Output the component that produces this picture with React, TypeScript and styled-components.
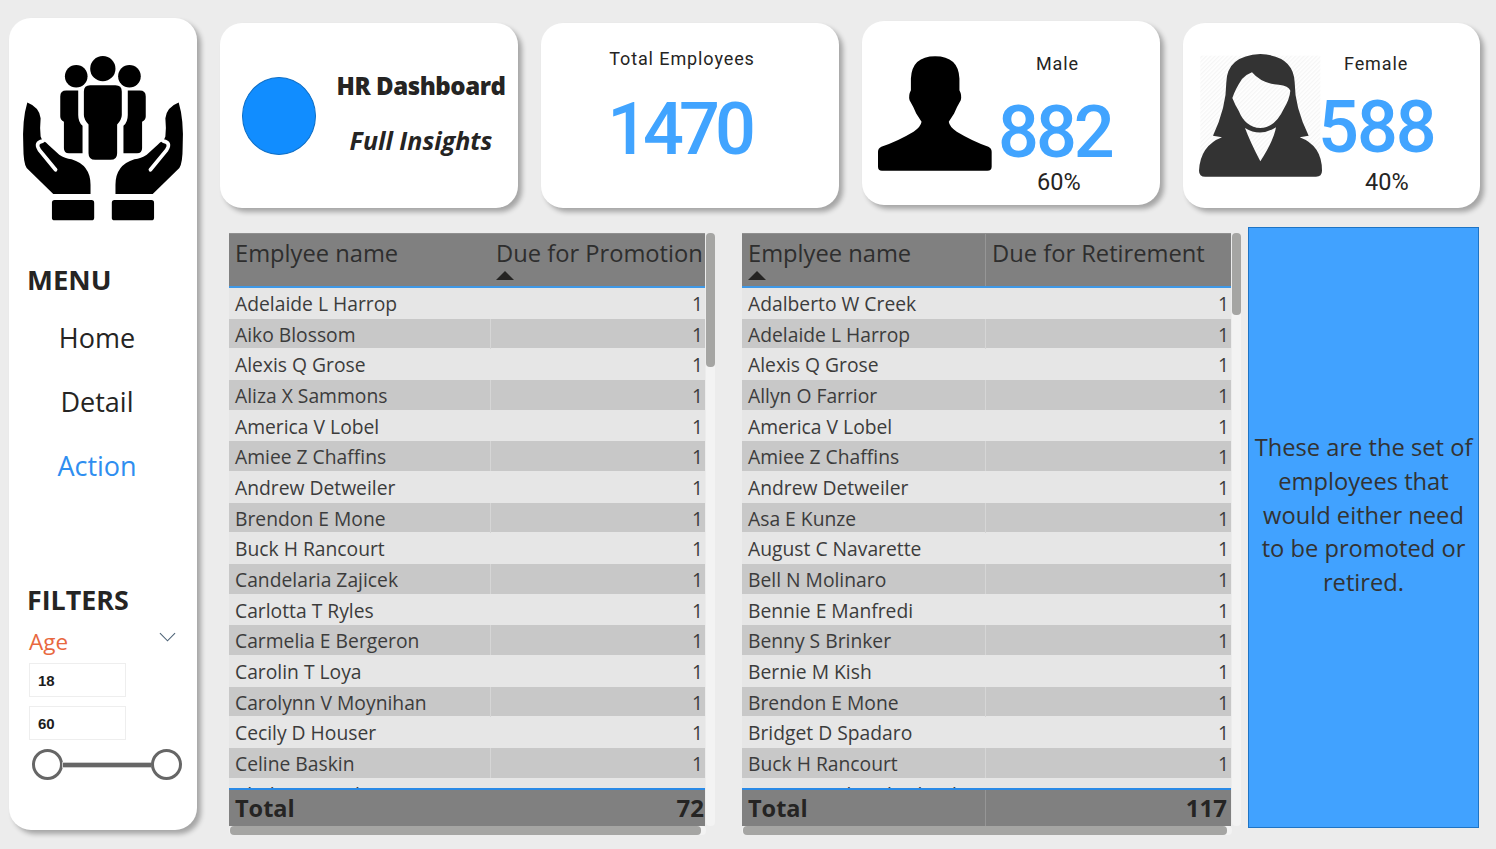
import React from 'react';
import styled, { createGlobalStyle } from 'styled-components';

const promotion = [
  'Adelaide L Harrop', 'Aiko Blossom', 'Alexis Q Grose', 'Aliza X Sammons', 'America V Lobel', 'Amiee Z Chaffins',
  'Andrew Detweiler', 'Brendon E Mone', 'Buck H Rancourt', 'Candelaria Zajicek', 'Carlotta T Ryles', 'Carmelia E Bergeron',
  'Carolin T Loya', 'Carolynn V Moynihan', 'Cecily D Houser', 'Celine Baskin', 'Chelsie D Pash',
];

const retirement = [
  'Adalberto W Creek', 'Adelaide L Harrop', 'Alexis Q Grose', 'Allyn O Farrior', 'America V Lobel', 'Amiee Z Chaffins',
  'Andrew Detweiler', 'Asa E Kunze', 'August C Navarette', 'Bell N Molinaro', 'Bennie E Manfredi', 'Benny S Brinker',
  'Bernie M Kish', 'Brendon E Mone', 'Bridget D Spadaro', 'Buck H Rancourt', 'Carmen J Chamberland',
];

const HandSide = ({ flip }: { flip?: boolean }) => (
  <g transform={flip ? 'translate(619 0) scale(-1 1)' : undefined}>
    <path d="M181 290Q181 272 199 272H235V345Q235 366 248 378V460H207Q192 460 192 445V366Q181 360 181 350Z" />
    <path d="M82 308Q118 322 122 355Q119 385 122 410L128 424Q138 425 145 435L178 465Q195 477 215 478Q272 495 272 555V583H160L80 505Q70 490 70 440Q66 360 82 308Z" />
    <path d="M128 424Q104 428 118 450L167 510" fill="none" stroke="#fff" strokeWidth="11" strokeLinecap="round" />
    <rect x="156" y="601" width="127" height="61" rx="8" />
  </g>
);

const HandsIcon = () => (
  <svg width="163" height="168" viewBox="66 165 490 505">
    <circle cx="309" cy="206" r="38" />
    <circle cx="229" cy="229" r="34" />
    <circle cx="389" cy="229" r="34" />
    <path d="M252 275Q252 256 271 256H347Q366 256 366 275V345Q366 358 352 374V460Q352 480 332 480H286Q266 480 266 460V374Q252 358 252 345Z" />
    <HandSide />
    <HandSide flip />
  </svg>
);

const MaleIcon = () => (
  <svg width="114" height="115" viewBox="83 138 343 344">
    <path d="M255 138Q325 138 328 205L328 240Q336 255 332 270Q320 290 312 310L296 335Q298 350 320 365Q370 395 415 410Q425 415 425 425V470Q425 482 412 482H95Q83 482 83 470V425Q83 415 93 410Q140 395 190 365Q212 350 214 335L198 310Q190 290 178 270Q174 255 182 240L182 205Q185 138 255 138Z" />
  </svg>
);

const FemaleIcon = () => (
  <svg width="123" height="123" viewBox="86 130 369 369">
    <defs>
      <pattern id="hatch" width="9" height="9" patternUnits="userSpaceOnUse" patternTransform="rotate(45)">
        <rect width="4" height="9" fill="#f5f5f5" />
      </pattern>
    </defs>
    <rect x="90" y="135" width="360" height="360" fill="url(#hatch)" />
    <path
      fill="#333"
      fillRule="evenodd"
      d="M270 130Q370 135 373 215Q373 290 415 375L388 380Q455 405 455 480Q455 498 437 498H105Q86 498 86 480Q90 405 155 380L128 375Q168 290 168 215Q170 135 270 130ZM245 185Q230 190 215 205Q195 235 186 262Q195 285 205 300Q225 350 270 352Q315 350 340 295Q358 265 360 240Q355 225 325 222Q275 220 245 185ZM224 352Q240 395 270 452Q310 390 317 350Q270 380 224 352Z"
    />
  </svg>
);

const DataTable = ({ names, title, total, split, thumb, sortFirst, width }: {
  names: string[];
  title: string;
  total: number;
  split: number;
  thumb: number;
  sortFirst: boolean;
  width: number;
}) => (
  <TableFrame $width={width}>
    <TableMain>
      <TableBody>
        <HeaderRow $split={split}>
          <HeaderCell>
            Emplyee name
            {sortFirst && <SortMark />}
          </HeaderCell>
          <HeaderCell $divider={sortFirst}>
            {title}
            {!sortFirst && <SortMark />}
          </HeaderCell>
        </HeaderRow>
        <Rows>
          {names.map((name, i) => (
            <Row key={name} $split={split} $alt={i % 2 === 1}>
              <NameCell>{name}</NameCell>
              <ValueCell $alt={i % 2 === 1}>1</ValueCell>
            </Row>
          ))}
        </Rows>
        <TotalRow $split={split}>
          <TotalCell>Total</TotalCell>
          <TotalValue $divider={sortFirst}>{total}</TotalValue>
        </TotalRow>
      </TableBody>
      <ScrollTrack>
        <ScrollThumb $height={thumb} />
      </ScrollTrack>
    </TableMain>
    <BottomTrack>
      <BottomThumb />
    </BottomTrack>
  </TableFrame>
);

const App = () => {
  return (
    <Page>
      <GlobalStyle />
      <Sidebar>
        <LogoBox>
          <HandsIcon />
        </LogoBox>
        <SideHeading>MENU</SideHeading>
        <MenuList>
          <MenuItem>Home</MenuItem>
          <MenuItem>Detail</MenuItem>
          <MenuItem $active>Action</MenuItem>
        </MenuList>
        <FilterHeading>FILTERS</FilterHeading>
        <AgeRow>
          <AgeLabel>Age</AgeLabel>
          <svg width="17" height="10" viewBox="0 0 18 10">
            <polyline points="1,1 9,9 17,1" fill="none" stroke="#4f6478" strokeWidth="1.2" />
          </svg>
        </AgeRow>
        <AgeInput>18</AgeInput>
        <AgeInput>60</AgeInput>
        <Slider>
          <Handle />
          <SliderLine />
          <Handle />
        </Slider>
      </Sidebar>
      <Main>
        <TopRow>
          <HeroCard>
            <HeroCircle />
            <HeroText>
              <HeroTitle>HR Dashboard</HeroTitle>
              <HeroSub>Full Insights</HeroSub>
            </HeroText>
          </HeroCard>
          <TotalCard>
            <TotalLabel>Total Employees</TotalLabel>
            <TotalNumber>1470</TotalNumber>
          </TotalCard>
          <MaleCard>
            <MaleIcon />
            <GenderStats>
              <MaleLabel>Male</MaleLabel>
              <MaleNumber>882</MaleNumber>
              <Percent>60%</Percent>
            </GenderStats>
          </MaleCard>
          <FemaleCard>
            <FemaleIcon />
            <GenderStats>
              <FemaleLabel>Female</FemaleLabel>
              <FemaleNumber>588</FemaleNumber>
              <FemalePercent>40%</FemalePercent>
            </GenderStats>
          </FemaleCard>
        </TopRow>
        <BottomRow>
          <DataTable names={promotion} title="Due for Promotion" total={72} split={261} thumb={134} sortFirst={false} width={486} />
          <DataTable names={retirement} title="Due for Retirement" total={117} split={243} thumb={82} sortFirst width={499} />
          <NotePanel>These are the set of employees that would either need to be promoted or retired.</NotePanel>
        </BottomRow>
      </Main>
    </Page>
  );
};

export default App;

const GlobalStyle = createGlobalStyle`
  html, body {
    margin: 0;
    padding: 0;
    background: #ececec;
    overflow: hidden;
  }
  * {
    box-sizing: border-box;
  }
`;

const Page = styled.div`
  display: flex;
  width: 1496px;
  height: 849px;
  padding: 18px 0 0 9px;
  background: #ececec;
  font-family: 'Open Sans', 'Noto Sans', sans-serif;
  color: #252423;
`;

const Sidebar = styled.aside`
  width: 188px;
  height: 812px;
  padding: 37px 0 0 19px;
  background: #fff;
  border-radius: 22px;
  box-shadow: 4px 4px 5px rgba(0, 0, 0, 0.3);
`;

const LogoBox = styled.div`
  display: flex;
  margin-left: -6px;
  height: 168px;
`;

const SideHeading = styled.div`
  margin: 39px 0 0 -1px;
  font-size: 27.5px;
  line-height: 36px;
  font-weight: 700;
`;

const MenuList = styled.div`
  display: flex;
  flex-direction: column;
  gap: 26px;
  width: 138px;
  margin-top: 21px;
`;

const MenuItem = styled.div<{ $active?: boolean }>`
  text-align: center;
  font-size: 27px;
  line-height: 38px;
  color: ${({ $active }) => ($active ? '#2f8ef0' : '#252423')};
`;

const FilterHeading = styled.div`
  margin: 97px 0 0 -1px;
  font-size: 26.8px;
  line-height: 36px;
  font-weight: 700;
`;

const AgeRow = styled.div`
  display: flex;
  justify-content: space-between;
  align-items: center;
  width: 148px;
  height: 32px;
  margin: 7px 0 6px;
  svg {
    margin-top: -8px;
  }
`;

const AgeLabel = styled.div`
  font-size: 22.5px;
  color: #e8683f;
  padding-left: 1px;
`;

const AgeInput = styled.div`
  width: 97px;
  height: 34px;
  margin: 0 0 9px 1px;
  padding-left: 8px;
  border: 1px solid #eeeeee;
  font-family: 'Liberation Sans', sans-serif;
  font-size: 15px;
  font-weight: 700;
  line-height: 34px;
  color: #1c1c1c;
`;

const Slider = styled.div`
  display: flex;
  align-items: center;
  width: 150px;
  margin: 0 0 0 4px;
`;

const Handle = styled.div`
  flex: none;
  width: 31px;
  height: 31px;
  border: 3px solid #666;
  border-radius: 50%;
  background: #fff;
`;

const SliderLine = styled.div`
  flex: 1;
  height: 4px;
  background: #666;
  box-shadow: 0 0 0 1px #ccc;
`;

const Main = styled.main`
  width: 1260px;
  margin-left: 23px;
`;

const TopRow = styled.div`
  display: flex;
  gap: 23px;
  height: 191px;
`;

const Card = styled.div`
  width: 298px;
  height: 185px;
  margin-top: 5px;
  background: #fff;
  border-radius: 22px;
  box-shadow: 4px 4px 5px rgba(0, 0, 0, 0.3);
`;

const HeroCard = styled(Card)`
  display: flex;
  align-items: center;
  padding-left: 22px;
`;

const HeroCircle = styled.div`
  flex: none;
  width: 74px;
  height: 78px;
  border-radius: 50%;
  background: #118dff;
  border: 1px solid #0f6fc6;
`;

const HeroText = styled.div`
  width: 180px;
  margin: -5px 0 0 15px;
  text-align: center;
`;

const HeroTitle = styled.div`
  font-size: 24px;
  line-height: 34px;
  font-weight: 800;
  letter-spacing: -0.45px;
  white-space: nowrap;
`;

const HeroSub = styled.div`
  margin-top: 20px;
  font-size: 25px;
  line-height: 34px;
  font-style: italic;
  font-weight: 700;
  white-space: nowrap;
`;

const TotalCard = styled(Card)`
  display: flex;
  flex-direction: column;
  align-items: center;
  padding: 24px 22px 0 0;
`;

const StatLabel = styled.div`
  font-family: Roboto, sans-serif;
  font-size: 18px;
  line-height: 24px;
  letter-spacing: 0.9px;
`;

const TotalLabel = styled(StatLabel)`
  margin-right: -6px;
`;

const BigNumber = styled.div`
  margin-top: 5px;
  font-family: Roboto, sans-serif;
  font-size: 72px;
  font-weight: 500;
  line-height: 84px;
  letter-spacing: -3px;
  color: #41a4ff;
`;

const TotalNumber = styled(BigNumber)`
  margin-top: 17px;
  letter-spacing: -5px;
`;

const MaleCard = styled(Card)`
  display: flex;
  align-items: flex-start;
  height: 184px;
  margin-top: 3px;
  padding: 35px 0 0 16px;
`;

const FemaleCard = styled(Card)`
  display: flex;
  align-items: flex-start;
  width: 297px;
  padding: 31px 0 0 16px;
`;

const GenderStats = styled.div`
  position: relative;
  display: flex;
  flex-direction: column;
`;

const MaleLabel = styled(StatLabel)`
  margin: -4px 0 0 44px;
`;

const FemaleLabel = styled(StatLabel)`
  margin: -2px 0 0 22px;
`;

const MaleNumber = styled(BigNumber)`
  margin: 15px 0 0 6px;
`;

const FemaleNumber = styled(BigNumber)`
  margin: 10px 0 0 -4px;
  letter-spacing: -2px;
`;

const Percent = styled.div`
  margin: -8px 0 0 45px;
  font-family: Roboto, sans-serif;
  font-size: 23.5px;
  line-height: 30px;
`;

const FemalePercent = styled(Percent)`
  margin: -3px 0 0 43px;
`;

const BottomRow = styled.div`
  display: flex;
  align-items: flex-start;
  padding-top: 18px;
  padding-left: 9px;
`;

const TableFrame = styled.div<{ $width: number }>`
  flex: none;
  width: ${({ $width }) => $width}px;
  margin: 6px 7px 0 0;
  & + & {
    margin-left: 20px;
  }
`;

const TableMain = styled.div`
  display: flex;
  justify-content: space-between;
`;

const TableBody = styled.div`
  flex: 1;
  display: flex;
  flex-direction: column;
  height: 593px;
  margin-right: 1px;
  overflow: hidden;
`;

const HeaderRow = styled.div<{ $split: number }>`
  flex: none;
  display: grid;
  grid-template-columns: ${({ $split }) => $split}px 1fr;
  height: 55px;
  background: #808080;
  border-top: 1px solid #909090;
  border-bottom: 2px solid #3f98e6;
`;

const HeaderCell = styled.div<{ $divider?: boolean }>`
  padding: 3px 0 0 6px;
  font-size: 23.7px;
  line-height: 32px;
  white-space: nowrap;
  overflow: hidden;
  color: #2e2e2e;
  border-left: ${({ $divider }) => ($divider ? '1px solid #969696' : 'none')};
`;

const SortMark = styled.div`
  width: 0;
  height: 0;
  margin-top: 2px;
  border-left: 9px solid transparent;
  border-right: 9px solid transparent;
  border-bottom: 9px solid #252423;
`;

const Rows = styled.div`
  flex: 1;
  min-height: 0;
  overflow: hidden;
`;

const Row = styled.div<{ $split: number; $alt: boolean }>`
  display: grid;
  grid-template-columns: ${({ $split }) => $split}px 1fr;
  height: 30.67px;
  background: ${({ $alt }) => ($alt ? '#c8c8c8' : '#e6e6e6')};
  border-bottom: 1px solid #e6e6e6;
`;

const NameCell = styled.div`
  padding: 1px 0 0 6px;
  font-size: 19.3px;
  line-height: 29px;
  white-space: nowrap;
  color: #3c3c3c;
`;

const ValueCell = styled.div<{ $alt: boolean }>`
  padding: 1px 2px 0 0;
  text-align: right;
  font-size: 19.3px;
  line-height: 29px;
  color: #3c3c3c;
  border-left: 1px solid ${({ $alt }) => ($alt ? '#d6d6d6' : '#e6e6e6')};
`;

const TotalRow = styled.div<{ $split: number }>`
  flex: none;
  display: grid;
  grid-template-columns: ${({ $split }) => $split}px 1fr;
  height: 38px;
  background: #808080;
  border-top: 2px solid #2b8ae6;
`;

const TotalCell = styled.div`
  padding-left: 6px;
  font-size: 23.5px;
  line-height: 36px;
  font-weight: 700;
  color: #252423;
`;

const TotalValue = styled(TotalCell)<{ $divider?: boolean }>`
  padding: 0 ${({ $divider }) => ($divider ? '4px' : '1px')} 0 0;
  font-size: 24px;
  text-align: right;
  border-left: ${({ $divider }) => ($divider ? '1px solid #969696' : 'none')};
`;

const ScrollTrack = styled.div`
  flex: none;
  width: 9px;
  height: 593px;
  background: #f3f3f3;
  border-radius: 4px;
`;

const ScrollThumb = styled.div<{ $height: number }>`
  width: 9px;
  height: ${({ $height }) => $height}px;
  background: #a5a5a3;
  border-radius: 4px;
`;

const BottomTrack = styled.div`
  width: calc(100% - 9px);
  height: 9px;
  padding: 0 5px 0 1px;
  background: #f3f3f3;
  border-radius: 4px;
`;

const BottomThumb = styled.div`
  height: 9px;
  background: #a5a5a3;
  border-radius: 4px;
`;

const NotePanel = styled.div`
  flex: none;
  display: flex;
  align-items: center;
  width: 231px;
  height: 601px;
  padding: 0 5px 24px;
  background: #41a2ff;
  border: 1px solid #1f74c4;
  font-size: 23.7px;
  line-height: 33.8px;
  text-align: center;
  color: #333;
`;
